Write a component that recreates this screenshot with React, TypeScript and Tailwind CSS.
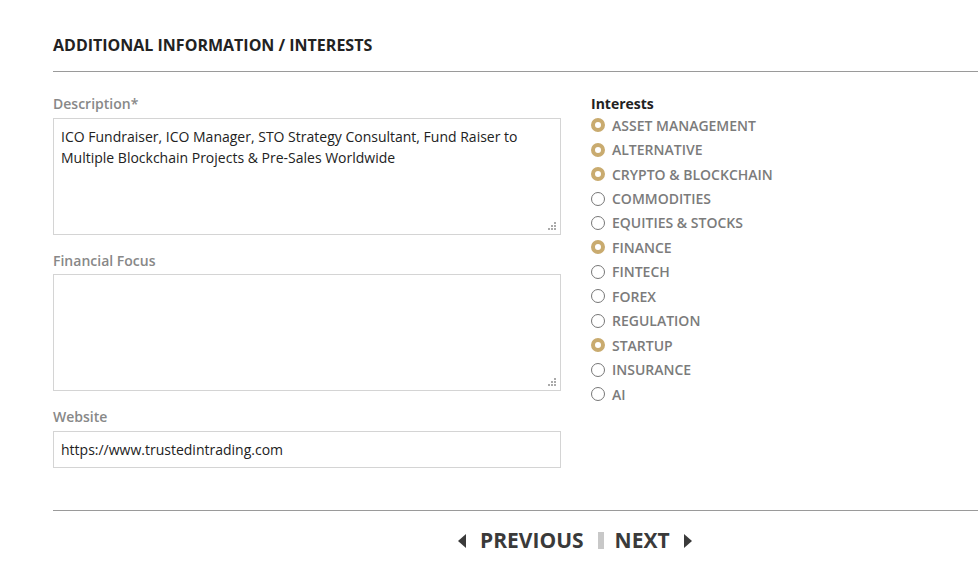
import React from 'react';

const interests = [
  { label: 'ASSET MANAGEMENT', checked: true },
  { label: 'ALTERNATIVE', checked: true },
  { label: 'CRYPTO & BLOCKCHAIN', checked: true },
  { label: 'COMMODITIES', checked: false },
  { label: 'EQUITIES & STOCKS', checked: false },
  { label: 'FINANCE', checked: true },
  { label: 'FINTECH', checked: false },
  { label: 'FOREX', checked: false },
  { label: 'REGULATION', checked: false },
  { label: 'STARTUP', checked: true },
  { label: 'INSURANCE', checked: false },
  { label: 'AI', checked: false },
];

const Grip = () => (
  <svg className="absolute right-[3px] bottom-[3px]" width="9" height="9" viewBox="0 0 9 9">
    <rect x="6" y="0" width="2" height="2" fill="#aaa" />
    <rect x="3" y="3" width="2" height="2" fill="#aaa" />
    <rect x="6" y="3" width="2" height="2" fill="#aaa" />
    <rect x="0" y="6" width="2" height="2" fill="#aaa" />
    <rect x="3" y="6" width="2" height="2" fill="#aaa" />
    <rect x="6" y="6" width="2" height="2" fill="#aaa" />
  </svg>
);

const TextBox = ({ value }: { value?: string }) => (
  <div className="relative h-[117px] border border-[#d4d4d4] bg-white px-[7px] py-[7px] text-[14px] leading-[21px] text-[#222]">
    {value}
    <Grip />
  </div>
);

export default function App() {
  return (
    <div className="min-h-[565px] bg-white pl-[53px] pt-[35px] font-['Open_Sans',sans-serif]">
      <h2 className="text-[16px] font-bold leading-[20px] text-[#222]">ADDITIONAL INFORMATION / INTERESTS</h2>
      <div className="mt-[16px] h-px bg-[#9a9a9a]" />

      <div className="flex gap-[30px] pt-[22px]">
        <div className="w-[508px]">
          <div className="text-[14px] font-semibold leading-[20px] text-[#888]">Description*</div>
          <div className="mt-[4px]">
            <TextBox value="ICO Fundraiser, ICO Manager, STO Strategy Consultant, Fund Raiser to Multiple Blockchain Projects & Pre-Sales Worldwide" />
          </div>

          <div className="mt-[16px] text-[14px] font-semibold leading-[20px] text-[#888]">Financial Focus</div>
          <div className="mt-[3px]">
            <TextBox />
          </div>

          <div className="mt-[16px] text-[14px] font-semibold leading-[20px] text-[#888]">Website</div>
          <div className="mt-[4px] flex h-[37px] items-center border border-[#d4d4d4] px-[7px] text-[14px] text-[#222]">
            https://www.trustedintrading.com
          </div>
        </div>

        <div>
          <div className="text-[14px] font-bold leading-[20px] text-[#222]">Interests</div>
          <div className="-mt-[1px] flex flex-col">
            {interests.map((item) => (
              <div key={item.label} className="flex h-[24.45px] items-center gap-[7px]">
                {item.checked ? (
                  <span className="h-[14px] w-[14px] rounded-full border-[4px] border-[#c9ab6f] bg-white" />
                ) : (
                  <span className="h-[14px] w-[14px] rounded-full border border-[#777] bg-white" />
                )}
                <span className="text-[14px] font-semibold text-[#7b7b7b]">{item.label}</span>
              </div>
            ))}
          </div>
        </div>
      </div>

      <div className="mt-[42px] h-px bg-[#9a9a9a]" />

      <div className="flex items-center pl-[405px] pt-[14px] text-[21px] font-bold text-[#3a3a3a]">
        <button className="flex items-center gap-[14px]">
          <svg width="8" height="14" viewBox="0 0 8 14"><path d="M8 0 L0 7 L8 14 Z" fill="#3a3a3a" /></svg>
          PREVIOUS
        </button>
        <span className="mr-[11px] ml-[14px] h-[17px] w-[6px] bg-[#c8c8c8]" />
        <button className="flex items-center gap-[14px]">
          NEXT
          <svg width="8" height="14" viewBox="0 0 8 14"><path d="M0 0 L8 7 L0 14 Z" fill="#3a3a3a" /></svg>
        </button>
      </div>
    </div>
  );
}
